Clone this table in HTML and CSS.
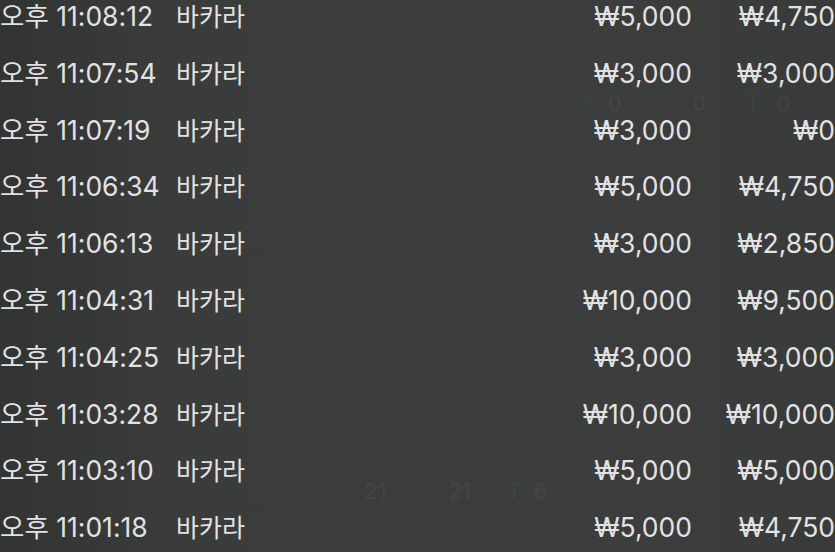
FILE: index.html
```html
<!DOCTYPE html>
<html>
<head>
    <title>Bet History</title>
    <link rel="stylesheet" href="styles.css">
</head>
<body>
    <div class="screen">
        <div class="ghost">
            <div class="ghost-stats top">
                <span class="p">P</span><span>0</span>
                <span class="b">B</span><span>0</span>
                <span class="t">T</span><span>0</span>
            </div>
            <div class="ghost-stats bottom">
                <span class="p">P</span><span>21</span>
                <span class="b">B</span><span>21</span>
                <span class="t">T</span><span>6</span>
            </div>
        </div>
        <div class="history">
            <div class="row"><span class="time">오후 11:08:12</span><span class="game">바카라</span><span class="bet">₩5,000</span><span class="win">₩4,750</span></div>
            <div class="row"><span class="time">오후 11:07:54</span><span class="game">바카라</span><span class="bet">₩3,000</span><span class="win">₩3,000</span></div>
            <div class="row"><span class="time">오후 11:07:19</span><span class="game">바카라</span><span class="bet">₩3,000</span><span class="win">₩0</span></div>
            <div class="row"><span class="time">오후 11:06:34</span><span class="game">바카라</span><span class="bet">₩5,000</span><span class="win">₩4,750</span></div>
            <div class="row"><span class="time">오후 11:06:13</span><span class="game">바카라</span><span class="bet">₩3,000</span><span class="win">₩2,850</span></div>
            <div class="row"><span class="time">오후 11:04:31</span><span class="game">바카라</span><span class="bet">₩10,000</span><span class="win">₩9,500</span></div>
            <div class="row"><span class="time">오후 11:04:25</span><span class="game">바카라</span><span class="bet">₩3,000</span><span class="win">₩3,000</span></div>
            <div class="row"><span class="time">오후 11:03:28</span><span class="game">바카라</span><span class="bet">₩10,000</span><span class="win">₩10,000</span></div>
            <div class="row"><span class="time">오후 11:03:10</span><span class="game">바카라</span><span class="bet">₩5,000</span><span class="win">₩5,000</span></div>
            <div class="row"><span class="time">오후 11:01:18</span><span class="game">바카라</span><span class="bet">₩5,000</span><span class="win">₩4,750</span></div>
        </div>
    </div>
</body>
</html>
```

FILE: styles.css
```css
html, body {
    margin: 0;
    padding: 0;
}
body {
    width: 835px;
    height: 552px;
    overflow: hidden;
    background-color: #3a3b3b;
    font-family: Inter, "Noto Sans CJK KR", sans-serif;
    color: #e2e2e2;
}
.screen {
    position: relative;
    width: 835px;
    height: 552px;
    overflow: hidden;
    background: linear-gradient(to right, #323333 0%, #3a3b3b 20%, #3c3d3d 70%, #393a3a 100%);
}
.ghost {
    position: absolute;
    inset: 0;
    opacity: 0.05;
    font-size: 22px;
    line-height: 1;
}
.ghost-stats {
    position: absolute;
    display: flex;
    gap: 12px;
}
.ghost-stats.top {
    left: 578px;
    top: 92px;
    gap: 16px;
}
.ghost-stats.bottom {
    left: 338px;
    top: 480px;
}
.ghost .p { color: #4a7dd8; margin-left: 24px; }
.ghost .b { color: #d84a4a; margin-left: 24px; }
.ghost .t { color: #4ad87d; margin-left: 24px; }
.ghost .p:first-child { margin-left: 0; }
.history {
    position: relative;
    margin-top: -12px;
}
.row {
    display: flex;
    align-items: baseline;
    height: 56.8px;
    padding-top: 1px;
    box-sizing: border-box;
    font-size: 26.5px;
    line-height: 54px;
    white-space: nowrap;
}
.time {
    width: 176px;
}
.game {
    width: 100px;
    font-size: 25px;
}
.bet {
    width: 416px;
    text-align: right;
}
.win {
    width: 143px;
    text-align: right;
}
```
